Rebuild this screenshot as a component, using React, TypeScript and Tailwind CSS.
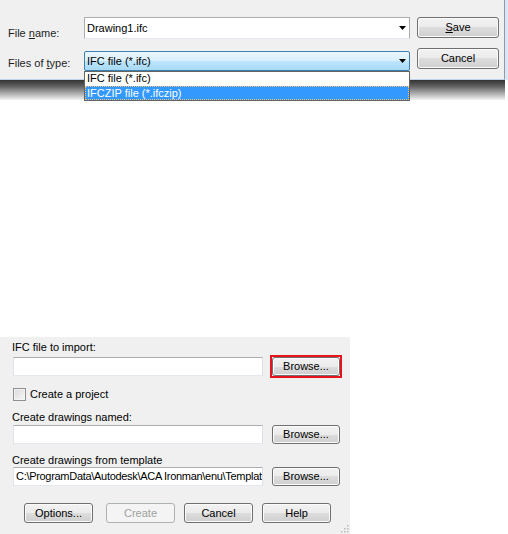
import React from "react";

const font = { fontFamily: '"Liberation Sans", Arial, sans-serif' };

const btn =
  "flex items-center justify-center rounded-[3px] border border-[#707070] bg-[linear-gradient(to_bottom,#f2f2f2_0%,#ebebeb_50%,#dddddd_50%,#cfcfcf_100%)] shadow-[inset_0_0_0_1px_#fbfbfb] text-[11px] leading-none text-black";

const input =
  "h-[19px] border border-[#abadb3] border-b-[#e3e9ef] border-l-[#e2e3ea] border-r-[#dbdfe6] bg-white";

function Arrow() {
  return (
    <svg width="7" height="4" viewBox="0 0 7 4" className="shrink-0">
      <path d="M0 0h7L3.5 4z" fill="#000" />
    </svg>
  );
}

function Grip() {
  return (
    <svg width="8" height="8" viewBox="0 0 8 8" className="absolute right-[1px] bottom-[1px]">
      {[
        [6, 0],
        [6, 3],
        [3, 3],
        [6, 6],
        [3, 6],
        [0, 6],
      ].map(([x, y]) => (
        <rect key={`${x}-${y}`} x={x} y={y} width="1.5" height="1.5" fill="#b8b8b8" />
      ))}
    </svg>
  );
}

function SaveDialog() {
  return (
    <div className="relative h-[100px] w-[508px]">
      <div className="flex h-[80px]">
        <div className="h-full w-[505px] border-r border-b border-[#8e9aa8] border-b-[#bfd3ea] bg-[#f0f0f0] pt-[17px]">
          {/* file name */}
          <div className="flex h-[22px] items-start">
            <div className="w-[84px] pl-[8px] pt-[10px] text-[11px] leading-[13px] text-[#1e1e1e]">
              File <span className="underline">n</span>ame:
            </div>
            <div className="flex h-[22px] w-[326px] items-center justify-between border border-[#abadb3] border-b-[#e3e9ef] bg-white pr-[3px] pl-[2px] text-[11px] text-black">
              <span>Drawing1.ifc</span>
              <Arrow />
            </div>
            <button className={`${btn} ml-[7px] h-[21px] w-[82px]`}>
              <span className="underline">S</span>ave
            </button>
          </div>
          {/* file type */}
          <div className="mt-[9px] flex h-[23px] items-start">
            <div className="w-[84px] pl-[8px] pt-[9px] text-[11px] leading-[13px] text-[#1e1e1e]">
              Files of <span className="underline">t</span>ype:
            </div>
            <div className="mt-[3px] flex h-[20px] w-[326px] items-center justify-between rounded-[2px] border border-[#3c7fb1] bg-[linear-gradient(to_bottom,#eaf6fd_0%,#d9f0fc_50%,#bee6fd_50%,#a7d9f5_100%)] pr-[3px] pl-[2px] text-[11px] text-black">
              <span>IFC file (*.ifc)</span>
              <Arrow />
            </div>
            <button className={`${btn} ml-[7px] h-[21px] w-[82px]`}>Cancel</button>
          </div>
        </div>
        <div className="h-full w-[3px] bg-[#dbe7f4]" />
      </div>
      <div className="h-[20px] w-[505px] bg-[linear-gradient(to_bottom,#333333_0%,#5e5e5e_30%,#a8a8a8_65%,#f2f2f2_100%)]" />

      {/* open list */}
      <div className="absolute top-[71px] left-[84px] w-[326px] border border-[#646464] bg-white text-[11px] leading-[13px]">
        <div className="h-[14px] px-[2px] text-black">IFC file (*.ifc)</div>
        <div className="h-[14px] border border-dotted border-[#f7c07a] bg-[#3399ff] px-[1px] leading-[12px] text-white">
          IFCZIP file (*.ifczip)
        </div>
      </div>
    </div>
  );
}

function Browse({ marked }: { marked?: boolean }) {
  return (
    <div className="relative ml-[9px]">
      <button className={`${btn} h-[19px] w-[68px]`}>Browse...</button>
      {marked && <div className="pointer-events-none absolute -inset-[2px] border-2 border-[#e8141b]" />}
    </div>
  );
}

function ImportDialog() {
  return (
    <div className="relative h-[197px] w-[350px] bg-[#f0f0f0] pt-[4px] pl-[12px] text-[11px] text-black">
      <div className="h-[13px] leading-[13px]">IFC file to import:</div>
      <div className="mt-[3px] flex h-[20px] items-start">
        <div className={`${input} ml-[1px] w-[250px]`} />
        <Browse marked />
      </div>

      <div className="mt-[10px] flex h-[14px] items-center">
        <div className="ml-[1px] h-[13px] w-[13px] border border-[#8e8f8f] bg-[linear-gradient(135deg,#d8d8d8,#f8f8f8)] shadow-[inset_0_0_0_1px_#f4f4f4]" />
        <span className="ml-[4px] leading-[13px]">Create a project</span>
      </div>

      <div className="mt-[10px] h-[13px] leading-[13px]">Create drawings named:</div>
      <div className="mt-[1px] flex h-[20px] items-start">
        <div className={`${input} ml-[1px] w-[250px]`} />
        <Browse />
      </div>

      <div className="mt-[9px] h-[13px] leading-[13px]">Create drawings from template</div>
      <div className="flex h-[20px] items-start">
        <div className={`${input} ml-[1px] flex w-[250px] items-center overflow-hidden pl-[2px] tracking-[-0.3px] whitespace-nowrap`}>
          C:\ProgramData\Autodesk\ACA Ironman\enu\Templat
        </div>
        <Browse />
      </div>

      <div className="mt-[16px] flex h-[20px] items-start">
        <button className={`${btn} ml-[12px] h-[20px] w-[69px]`}>Options...</button>
        <button className="ml-[13px] flex h-[20px] w-[69px] items-center justify-center rounded-[3px] border border-[#adb2b5] bg-[#f4f4f4] text-[11px] leading-none text-[#a0a0a0]">
          Create
        </button>
        <button className={`${btn} ml-[9px] h-[20px] w-[69px]`}>Cancel</button>
        <button className={`${btn} ml-[9px] h-[20px] w-[69px]`}>Help</button>
      </div>
      <Grip />
    </div>
  );
}

export default function App() {
  return (
    <div className="h-[534px] w-[508px] overflow-hidden bg-white" style={font}>
      <SaveDialog />
      <div className="h-[237px]" />
      <ImportDialog />
    </div>
  );
}
